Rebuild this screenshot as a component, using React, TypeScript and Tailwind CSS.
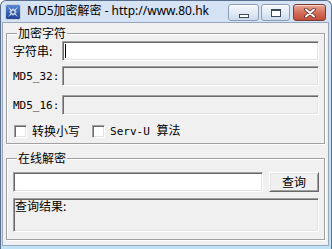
import type { ReactNode } from 'react';

const cjk = "font-['Noto_Sans_CJK_SC','Noto_Sans',sans-serif]";
const mono = "font-['DejaVu_Sans_Mono','Noto_Sans_CJK_SC',monospace]";

const sunken =
  'border border-t-[#a0a0a0] border-l-[#a0a0a0] border-r-white border-b-white shadow-[inset_1px_1px_0_#696969,inset_-1px_-1px_0_#e3e3e3]';

function AppIcon() {
  return (
    <svg width="16" height="16" viewBox="0 0 16 16">
      <defs>
        <linearGradient id="ico" x1="0" y1="0" x2="0" y2="1">
          <stop offset="0" stopColor="#5b8bd8" />
          <stop offset="1" stopColor="#1d3f8e" />
        </linearGradient>
      </defs>
      <rect x="0.5" y="0.5" width="15" height="15" rx="2" fill="url(#ico)" stroke="#c9d0dc" />
      <path
        d="M3 3 L7 6 L8 4 L9 6 L13 3 L10 7 L12 8 L10 9 L13 13 L9 10 L8 12 L7 10 L3 13 L6 9 L4 8 L6 7 Z"
        fill="#eef3fb"
      />
      <circle cx="8" cy="8" r="1.6" fill="#2a4f9e" />
    </svg>
  );
}

function CaptionButton({ kind }: { kind: 'min' | 'max' | 'close' }) {
  if (kind === 'close') {
    return (
      <div className="flex h-[17px] w-[33px] items-center justify-center rounded-[3px] border border-[#7a3b33] bg-gradient-to-b from-[#e8a797] via-[#d4705b] to-[#c04c38] shadow-[inset_0_1px_0_rgba(255,255,255,0.5)]">
        <svg width="12" height="10" viewBox="0 0 12 10">
          <path d="M2 1.5 L10 8.5 M10 1.5 L2 8.5" stroke="#5a2a24" strokeWidth="3.6" strokeLinecap="round" />
          <path d="M2 1.5 L10 8.5 M10 1.5 L2 8.5" stroke="#ffffff" strokeWidth="2" strokeLinecap="round" />
        </svg>
      </div>
    );
  }
  return (
    <div
      className={`flex h-[17px] ${kind === 'min' ? 'w-[31px]' : 'w-[29px]'} items-center justify-center rounded-[3px] border border-[#8d9db5] bg-gradient-to-b from-[#f5f8fc] via-[#e2eaf5] to-[#cddbee] shadow-[inset_0_1px_0_rgba(255,255,255,0.8)]`}
    >
      {kind === 'min' ? (
        <div className="mt-[6px] h-[4px] w-[10px] border border-[#3c4a5e] bg-white" />
      ) : (
        <div className="h-[8px] w-[10px] border border-t-2 border-[#3c4a5e] bg-white" />
      )}
    </div>
  );
}

function GroupBox({ title, children, className = '' }: { title: string; children: ReactNode; className?: string }) {
  return (
    <fieldset
      className={`min-w-0 border border-[#a0a0a0] pl-[6px] pr-[5px] shadow-[inset_1px_1px_0_#ffffff,1px_1px_0_#ffffff] ${className}`}
    >
      <legend className="ml-[4px] bg-[#f0f0f0] px-[1px] leading-[14px]">{title}</legend>
      {children}
    </fieldset>
  );
}

function FieldRow({ label, children, className = '' }: { label: ReactNode; children: ReactNode; className?: string }) {
  return (
    <div className={`flex items-center ${className}`}>
      <div className="w-[49px] shrink-0 leading-[14px]">{label}</div>
      {children}
    </div>
  );
}

function CheckBox({ label }: { label: ReactNode }) {
  return (
    <div className="flex items-center">
      <div className={`h-[13px] w-[13px] bg-white ${sunken}`} />
      <span className="ml-[5px] leading-[14px]">{label}</span>
    </div>
  );
}

export default function App() {
  return (
    <div
      className={`flex h-[249px] w-[332px] flex-col overflow-hidden rounded-t-[6px] border-x border-t border-[#5a6f8c] bg-gradient-to-b from-[#d6e3f4] via-[#cddef2] to-[#bfe3f5] text-[12px] text-black ${cjk}`}
    >
      {/* title bar */}
      <div className="flex h-[21px] shrink-0 items-start">
        <div className="ml-[4px] mt-[3px] shrink-0">
          <AppIcon />
        </div>
        <div className="ml-[6px] mt-[2px] whitespace-nowrap font-['Noto_Sans','Noto_Sans_CJK_SC',sans-serif] text-[12px] leading-[16px]">
          MD5加密解密 - http://www.80.hk
        </div>
        <div className="ml-auto mr-[5px] mt-[3px] flex shrink-0 gap-[2px]">
          <CaptionButton kind="min" />
          <CaptionButton kind="max" />
          <div className="ml-[1px]">
            <CaptionButton kind="close" />
          </div>
        </div>
      </div>

      {/* client area */}
      <div className="ml-[1px] mr-[2px] flex h-[224px] shrink-0 flex-col border border-[#96a8c0] bg-[#f0f0f0] px-[3px]">
        <GroupBox title="加密字符" className="mt-[3px] pb-[5px]">
          <FieldRow label="字符串:" className="mt-[1px]">
            <div className={`relative h-[20px] flex-1 bg-white ${sunken}`}>
              <div className="absolute left-[2px] top-[2px] h-[14px] w-[1px] bg-black" />
            </div>
          </FieldRow>
          <FieldRow label={<span className={`${mono} text-[11px]`}>MD5_32:</span>} className="mt-[5px]">
            <div className={`h-[20px] flex-1 bg-[#f0f0f0] ${sunken}`} />
          </FieldRow>
          <FieldRow label={<span className={`${mono} text-[11px]`}>MD5_16:</span>} className="mt-[9px]">
            <div className={`h-[20px] flex-1 bg-[#f0f0f0] ${sunken}`} />
          </FieldRow>
          <div className="mt-[9px] flex h-[14px] items-center gap-[12px] pl-[1px]">
            <CheckBox label="转换小写" />
            <CheckBox
              label={
                <>
                  <span className={`${mono} text-[11px]`}>Serv-U </span>算法
                </>
              }
            />
          </div>
        </GroupBox>

        <GroupBox title="在线解密" className="mt-[7px] pb-[7px]">
          <div className="mt-[7px] flex gap-[6px]">
            <div className={`h-[20px] flex-1 bg-white ${sunken}`} />
            <button
              type="button"
              className="flex h-[20px] w-[50px] items-center justify-center border border-t-white border-l-white border-r-[#696969] border-b-[#696969] bg-[#f0f0f0] leading-[14px] shadow-[inset_1px_1px_0_#e3e3e3,inset_-1px_-1px_0_#a0a0a0]"
            >
              查询
            </button>
          </div>
          <div className={`mt-[6px] h-[34px] bg-[#f0f0f0] px-[1px] leading-[14px] ${sunken}`}>查询结果:</div>
        </GroupBox>
      </div>
    </div>
  );
}
